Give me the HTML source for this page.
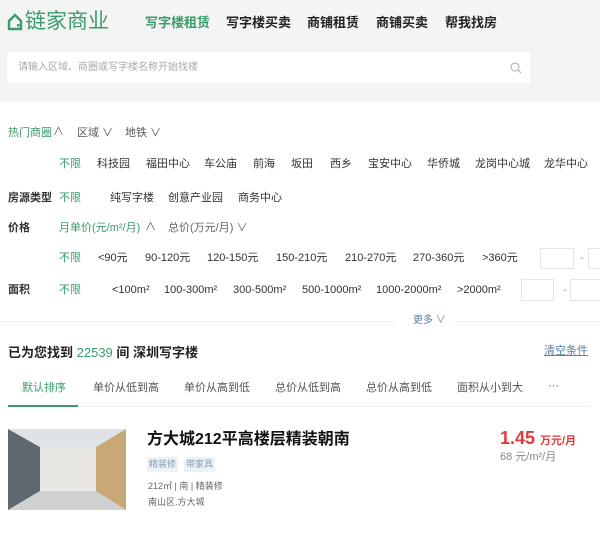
<!DOCTYPE html><html><head><meta charset="utf-8"><style>
*{margin:0;padding:0;box-sizing:border-box}
body{width:600px;height:533px;position:relative;background:#fff;font-family:"Liberation Sans","Noto Sans CJK SC",sans-serif;color:#333;overflow:hidden}
.a{position:absolute;white-space:nowrap;line-height:1}
.g{color:#3a9c6a}
.b{font-weight:bold}
.f{font-size:11px}
.c{font-size:9px;color:#666}
.box{position:absolute;border:1px solid #e5e5e5;background:#fff}
</style></head><body>
<div style="position:absolute;left:0;top:0;width:600px;height:102px;background:#f4f4f4"></div>
<svg class="a" style="left:7px;top:13px" width="16" height="18" viewBox="0 0 16 18"><path d="M2 8 L8 2 L14 8 V16 H2 Z" fill="none" stroke="#3a9c6a" stroke-width="2.4"/><rect x="10" y="11" width="2.5" height="2.5" fill="#3a9c6a"/></svg>
<div class="a g" style="left:25px;top:11px;font-size:21px">链家商业</div>
<div class="a g b" style="left:145px;top:16px;font-size:13px">写字楼租赁</div>
<div class="a b" style="left:226px;top:16px;font-size:13px;color:#222">写字楼买卖</div>
<div class="a b" style="left:307px;top:16px;font-size:13px;color:#222">商铺租赁</div>
<div class="a b" style="left:376px;top:16px;font-size:13px;color:#222">商铺买卖</div>
<div class="a b" style="left:445px;top:16px;font-size:13px;color:#222">帮我找房</div>
<div style="position:absolute;left:7px;top:52px;width:523px;height:31px;background:#fff"></div>
<div class="a" style="left:18px;top:63px;font-size:10px;color:#aaa">请输入区域、商圈或写字楼名称开始找楼</div>
<svg class="a" style="left:510px;top:62px" width="12" height="12" viewBox="0 0 12 12"><circle cx="5" cy="5" r="4" fill="none" stroke="#aaa" stroke-width="1"/><path d="M8 8 L11 11" stroke="#aaa"/></svg>

<div class="a g f" style="left:8px;top:128px">热门商圈</div><div class="a f" style="left:53px;top:127px;color:#666">∧</div>
<div class="a f" style="left:77px;top:128px;color:#555">区域 ∨</div>
<div class="a f" style="left:125px;top:128px;color:#555">地铁 ∨</div>

<div class="a g f" style="left:59px;top:159px">不限</div>
<div class="a f" style="left:97px;top:159px">科技园</div>
<div class="a f" style="left:146px;top:159px">福田中心</div>
<div class="a f" style="left:204px;top:159px">车公庙</div>
<div class="a f" style="left:253px;top:159px">前海</div>
<div class="a f" style="left:291px;top:159px">坂田</div>
<div class="a f" style="left:330px;top:159px">西乡</div>
<div class="a f" style="left:368px;top:159px">宝安中心</div>
<div class="a f" style="left:427px;top:159px">华侨城</div>
<div class="a f" style="left:475px;top:159px">龙岗中心城</div>
<div class="a f" style="left:544px;top:159px">龙华中心</div>

<div class="a f b" style="left:8px;top:193px">房源类型</div>
<div class="a g f" style="left:59px;top:193px">不限</div>
<div class="a f" style="left:110px;top:193px">纯写字楼</div>
<div class="a f" style="left:168px;top:193px">创意产业园</div>
<div class="a f" style="left:238px;top:193px">商务中心</div>

<div class="a f b" style="left:8px;top:223px">价格</div>
<div class="a g f" style="left:59px;top:223px">月单价(元/m²/月)</div><div class="a f" style="left:145px;top:222px;color:#666">∧</div>
<div class="a f" style="left:168px;top:223px;color:#666">总价(万元/月) ∨</div>

<div class="a g f" style="left:59px;top:253px">不限</div>
<div class="a f" style="left:98px;top:253px">&lt;90元</div>
<div class="a f" style="left:145px;top:253px">90-120元</div>
<div class="a f" style="left:207px;top:253px">120-150元</div>
<div class="a f" style="left:276px;top:253px">150-210元</div>
<div class="a f" style="left:345px;top:253px">210-270元</div>
<div class="a f" style="left:413px;top:253px">270-360元</div>
<div class="a f" style="left:482px;top:253px">&gt;360元</div>
<div class="box" style="left:540px;top:248px;width:34px;height:21px"></div>
<div class="a f" style="left:580px;top:253px;color:#999">-</div>
<div class="box" style="left:588px;top:248px;width:34px;height:21px"></div>

<div class="a f b" style="left:8px;top:285px">面积</div>
<div class="a g f" style="left:59px;top:285px">不限</div>
<div class="a f" style="left:112px;top:285px">&lt;100m²</div>
<div class="a f" style="left:164px;top:285px">100-300m²</div>
<div class="a f" style="left:233px;top:285px">300-500m²</div>
<div class="a f" style="left:302px;top:285px">500-1000m²</div>
<div class="a f" style="left:376px;top:285px">1000-2000m²</div>
<div class="a f" style="left:457px;top:285px">&gt;2000m²</div>
<div class="box" style="left:521px;top:279px;width:33px;height:22px"></div>
<div class="a f" style="left:563px;top:285px;color:#999">-</div>
<div class="box" style="left:570px;top:279px;width:34px;height:22px"></div>

<div style="position:absolute;left:0;top:321px;width:395px;height:1px;background:#eee"></div>
<div style="position:absolute;left:455px;top:321px;width:145px;height:1px;background:#eee"></div>
<div class="a" style="left:413px;top:316px;font-size:10px;color:#5a7fa6">更多 ∨</div>

<div class="a b" style="left:8px;top:346px;font-size:13px;color:#222">已为您找到 <span class="g" style="font-weight:normal">22539</span> 间 深圳写字楼</div>
<div class="a f" style="left:544px;top:346px;color:#5a7fa6;text-decoration:underline">清空条件</div>

<div class="a g f" style="left:22px;top:383px">默认排序</div>
<div class="a f" style="left:93px;top:383px;color:#555">单价从低到高</div>
<div class="a f" style="left:184px;top:383px;color:#555">单价从高到低</div>
<div class="a f" style="left:275px;top:383px;color:#555">总价从低到高</div>
<div class="a f" style="left:366px;top:383px;color:#555">总价从高到低</div>
<div class="a f" style="left:457px;top:383px;color:#555">面积从小到大</div>
<div class="a f" style="left:548px;top:381px;color:#555">···</div>
<div style="position:absolute;left:8px;top:406px;width:582px;height:1px;background:#eee"></div>
<div style="position:absolute;left:8px;top:405px;width:70px;height:2px;background:#3a9c6a"></div>

<svg class="a" style="left:8px;top:429px" width="118" height="81" viewBox="0 0 118 81">
<rect width="118" height="81" fill="#c9ccce"/>
<polygon points="0,0 32,18 32,62 0,81" fill="#5d6870"/>
<polygon points="118,0 88,18 88,62 118,81" fill="#c9a877"/>
<rect x="32" y="18" width="56" height="44" fill="#e8e7e3"/>
<polygon points="0,0 118,0 88,18 32,18" fill="#dfe3e6"/>
<polygon points="32,62 88,62 118,81 0,81" fill="#cfd0cf"/>
</svg>
<div class="a b" style="left:147px;top:432px;font-size:16px;color:#111">方大城212平高楼层精装朝南</div>
<div class="a" style="left:147px;top:457px;font-size:9px;color:#8a9bb0;background:#eef2f6;padding:3px 2px">精装修</div>
<div class="a" style="left:184px;top:457px;font-size:9px;color:#8a9bb0;background:#eef2f6;padding:3px 2px">带家具</div>
<div class="a c" style="left:148px;top:482px">212㎡ | 南 | 精装修</div>
<div class="a c" style="left:148px;top:498px">南山区.方大城</div>
<div class="a b" style="left:500px;top:429px;font-size:18px;color:#e4393c">1.45 <span style="font-size:11px">万元/月</span></div>
<div class="a" style="left:500px;top:452px;font-size:11px;color:#888">68 元/m²/月</div>
</body></html>
